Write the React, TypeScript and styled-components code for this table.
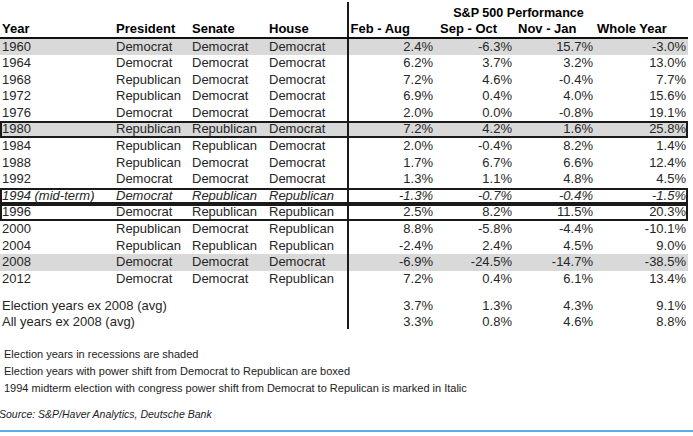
import React from "react";
import styled, { createGlobalStyle } from "styled-components";

const GlobalStyle = createGlobalStyle`
  html, body {
    margin: 0;
    padding: 0;
    background: #ffffff;
  }
  body {
    font-family: "Liberation Sans", Arial, Helvetica, sans-serif;
    color: #222;
  }
`;

const COLS = "116px 76px 77px 78px 88px 79px 81px 93px";

const Page = styled.div`
  width: 693px;
  height: 436px;
  overflow: hidden;
  position: relative;
`;

const Table = styled.div`
  width: 688px;
  display: flex;
  flex-direction: column;
`;

const TitleRow = styled.div`
  display: grid;
  grid-template-columns: 347px 341px;
  margin-top: 2px;
  height: 19px;
`;

const TitleCell = styled.div`
  border-left: 2px solid #1a1a1a;
  box-sizing: border-box;
  text-align: center;
  font-weight: bold;
  font-size: 12.6px;
  line-height: 16px;
  padding-top: 3px;
  color: #000;
`;

const HeaderRow = styled.div`
  display: grid;
  grid-template-columns: ${COLS};
  height: 15.5px;
  border-bottom: 2px solid #111;
`;

const HeadCell = styled.div<{ $pl?: number; $line?: boolean }>`
  box-sizing: border-box;
  font-weight: bold;
  font-size: 13px;
  line-height: 15px;
  color: #000;
  white-space: nowrap;
  padding-left: ${(p) => p.$pl ?? 0}px;
  border-left: ${(p) => (p.$line ? "2px solid #1a1a1a" : "none")};
`;

const Row = styled.div<{ $shaded?: boolean; $boxed?: boolean; $italic?: boolean; $h?: number }>`
  display: grid;
  grid-template-columns: ${COLS};
  height: ${(p) => p.$h ?? 16.6}px;
  background: ${(p) => (p.$shaded ? "#d9d9d9" : "transparent")};
  box-shadow: ${(p) => (p.$boxed ? "inset 0 0 0 2px #1a1a1a" : "none")};
  font-style: ${(p) => (p.$italic ? "italic" : "normal")};
  font-size: 13px;
  color: #262626;
`;

const Cell = styled.div<{ $pl?: number; $h?: number }>`
  box-sizing: border-box;
  white-space: nowrap;
  line-height: ${(p) => p.$h ?? 16.6}px;
  padding-left: ${(p) => p.$pl ?? 0}px;
`;

const LabelCell = styled(Cell)`
  grid-column: 1 / 5;
`;

const NumCell = styled.div<{ $line?: boolean; $h?: number }>`
  box-sizing: border-box;
  white-space: nowrap;
  text-align: right;
  padding-right: 2px;
  line-height: ${(p) => p.$h ?? 16.6}px;
  border-left: ${(p) => (p.$line ? "2px solid #1a1a1a" : "none")};
`;

const SpacerRow = styled.div`
  display: grid;
  grid-template-columns: 347px 341px;
  height: 10.5px;
`;

const LineOnly = styled.div`
  border-left: 2px solid #1a1a1a;
`;

const Notes = styled.div`
  margin-top: 17px;
  padding-left: 4px;
  font-size: 11px;
  line-height: 17px;
  color: #222;
`;

const Source = styled.div`
  margin-top: 9.5px;
  font-size: 10.5px;
  line-height: 14px;
  font-style: italic;
  color: #222;
  text-indent: -1px;
`;

const BottomRule = styled.div`
  margin-top: 9px;
  height: 2px;
  width: 693px;
  background: #5aaee6;
`;

type DataRow = {
  year: string;
  p: string;
  s: string;
  h: string;
  v: string[];
  shaded?: boolean;
  boxed?: boolean;
  italic?: boolean;
};

const D = "Democrat";
const R = "Republican";

const rows: DataRow[] = [
  { year: "1960", p: D, s: D, h: D, v: ["2.4%", "-6.3%", "15.7%", "-3.0%"], shaded: true },
  { year: "1964", p: D, s: D, h: D, v: ["6.2%", "3.7%", "3.2%", "13.0%"] },
  { year: "1968", p: R, s: D, h: D, v: ["7.2%", "4.6%", "-0.4%", "7.7%"] },
  { year: "1972", p: R, s: D, h: D, v: ["6.9%", "0.4%", "4.0%", "15.6%"] },
  { year: "1976", p: D, s: D, h: D, v: ["2.0%", "0.0%", "-0.8%", "19.1%"] },
  { year: "1980", p: R, s: R, h: D, v: ["7.2%", "4.2%", "1.6%", "25.8%"], shaded: true, boxed: true },
  { year: "1984", p: R, s: R, h: D, v: ["2.0%", "-0.4%", "8.2%", "1.4%"] },
  { year: "1988", p: R, s: D, h: D, v: ["1.7%", "6.7%", "6.6%", "12.4%"] },
  { year: "1992", p: D, s: D, h: D, v: ["1.3%", "1.1%", "4.8%", "4.5%"] },
  { year: "1994 (mid-term)", p: D, s: R, h: R, v: ["-1.3%", "-0.7%", "-0.4%", "-1.5%"], boxed: true, italic: true },
  { year: "1996", p: D, s: R, h: R, v: ["2.5%", "8.2%", "11.5%", "20.3%"], boxed: true },
  { year: "2000", p: R, s: D, h: R, v: ["8.8%", "-5.8%", "-4.4%", "-10.1%"] },
  { year: "2004", p: R, s: R, h: R, v: ["-2.4%", "2.4%", "4.5%", "9.0%"] },
  { year: "2008", p: D, s: D, h: D, v: ["-6.9%", "-24.5%", "-14.7%", "-38.5%"], shaded: true },
  { year: "2012", p: D, s: D, h: R, v: ["7.2%", "0.4%", "6.1%", "13.4%"] },
];

const averages = [
  { label: "Election years ex 2008 (avg)", v: ["3.7%", "1.3%", "4.3%", "9.1%"] },
  { label: "All years ex 2008 (avg)", v: ["3.3%", "0.8%", "4.6%", "8.8%"] },
];

const headers = [
  { t: "Feb - Aug", pl: 1.5 },
  { t: "Sep - Oct", pl: 5 },
  { t: "Nov - Jan", pl: 4 },
  { t: "Whole Year", pl: 2 },
];

export default function App() {
  return (
    <Page>
      <GlobalStyle />
      <Table>
        <TitleRow>
          <div />
          <TitleCell>S&amp;P 500 Performance</TitleCell>
        </TitleRow>
        <HeaderRow>
          <HeadCell $pl={2}>Year</HeadCell>
          <HeadCell>President</HeadCell>
          <HeadCell>Senate</HeadCell>
          <HeadCell>House</HeadCell>
          {headers.map((h, i) => (
            <HeadCell key={h.t} $pl={h.pl} $line={i === 0}>
              {h.t}
            </HeadCell>
          ))}
        </HeaderRow>
        {rows.map((r) => (
          <Row key={r.year} $shaded={r.shaded} $boxed={r.boxed} $italic={r.italic}>
            <Cell $pl={2}>{r.year}</Cell>
            <Cell>{r.p}</Cell>
            <Cell>{r.s}</Cell>
            <Cell>{r.h}</Cell>
            {r.v.map((v, i) => (
              <NumCell key={i} $line={i === 0}>
                {v}
              </NumCell>
            ))}
          </Row>
        ))}
        <SpacerRow>
          <div />
          <LineOnly />
        </SpacerRow>
        {averages.map((a) => (
          <Row key={a.label} $h={15.75}>
            <LabelCell $pl={2} $h={15.75}>
              {a.label}
            </LabelCell>
            {a.v.map((v, i) => (
              <NumCell key={i} $line={i === 0} $h={15.75}>
                {v}
              </NumCell>
            ))}
          </Row>
        ))}
      </Table>
      <Notes>
        <div>Election years in recessions are shaded</div>
        <div>Election years with power shift from Democrat to Republican are boxed</div>
        <div>1994 midterm election with congress power shift from Democrat to Repulican is marked in Italic</div>
      </Notes>
      <Source>Source: S&amp;P/Haver Analytics, Deutsche Bank</Source>
      <BottomRule />
    </Page>
  );
}
